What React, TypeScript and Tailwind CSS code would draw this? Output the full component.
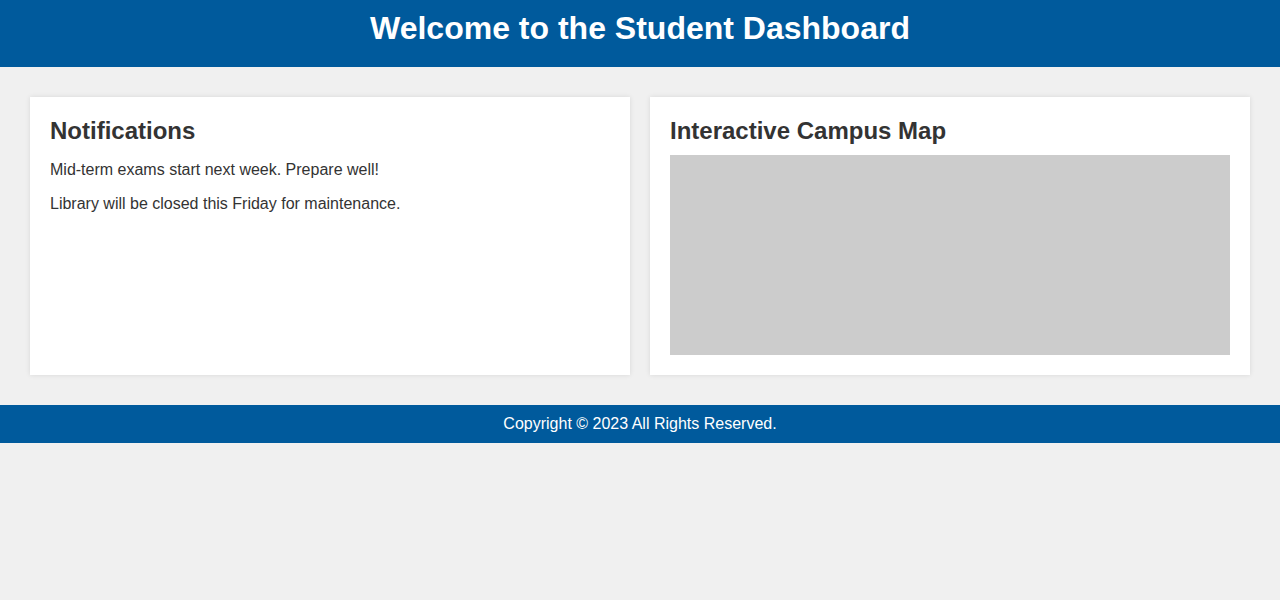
export default function App() {
  return (
    <div className="min-h-[600px] bg-[#f0f0f0] text-[#333] font-['Liberation_Sans',Arial,sans-serif]">
      {/* Header */}
      <header className="bg-[#005a9c] pt-[10px] pb-[20px] text-center text-white">
        <h1 className="m-0 text-[32px] font-bold leading-[37px]">Welcome to the Student Dashboard</h1>
      </header>

      {/* Main content */}
      <main className="grid grid-cols-2 gap-5 p-[30px]">
        <section className="bg-white p-5 shadow-[0_0_5px_rgba(0,0,0,0.1)]">
          <h2 className="text-2xl font-bold leading-[28px]">Notifications</h2>
          <p className="my-4 text-base leading-[18px]">Mid-term exams start next week. Prepare well!</p>
          <p className="my-4 text-base leading-[18px]">Library will be closed this Friday for maintenance.</p>
        </section>

        <section className="bg-white p-5 shadow-[0_0_5px_rgba(0,0,0,0.1)]">
          <h2 className="mb-[10px] text-2xl font-bold leading-[28px]">Interactive Campus Map</h2>
          <div className="h-[200px] w-full bg-[#ccc]"></div>
        </section>
      </main>

      {/* Footer */}
      <footer className="bg-[#005a9c] py-[10px] text-center text-base leading-[18px] text-white">
        Copyright © 2023 All Rights Reserved.
      </footer>
    </div>
  );
}
